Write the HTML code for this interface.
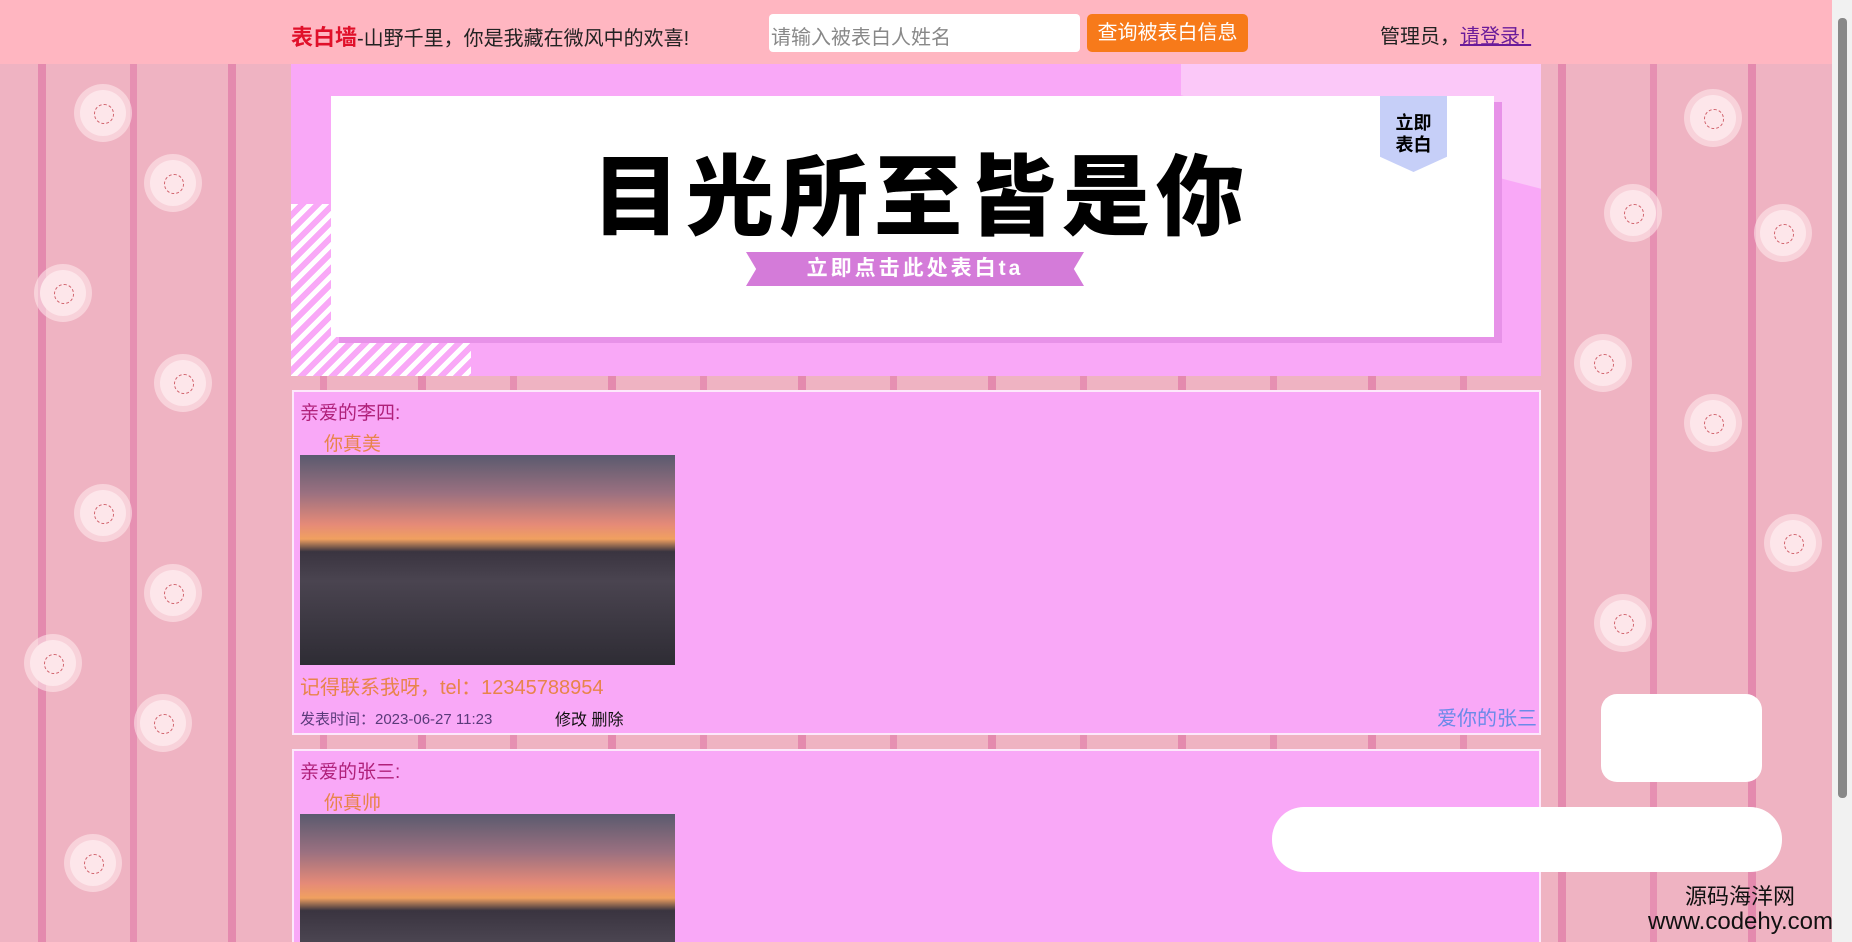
<!DOCTYPE html>
<html style="overflow:hidden;width:1852px;height:942px"><head><meta charset="utf-8"><style>
*{margin:0;padding:0;box-sizing:border-box}
body{width:1852px;height:942px;overflow:hidden;position:relative;font-family:"Liberation Sans","Noto Sans CJK SC",sans-serif;
background:#efb3c2;
background-image:repeating-linear-gradient(90deg,transparent 0 38px,#e48aae 38px 46px,transparent 46px 130px,#e690b2 130px 137px,transparent 137px 190px);}
.fl{position:absolute;width:46px;height:46px;border-radius:50%;background:#fde6ea;box-shadow:0 0 0 6px rgba(253,230,234,.6)}
.fl:after{content:"";position:absolute;left:14px;top:14px;width:18px;height:18px;border-radius:50%;border:1px dashed #d0606a}
.top{position:absolute;left:0;top:0;width:1832px;height:64px;background:#ffb6c1}
.sb{position:absolute;left:1832px;top:0;width:20px;height:942px;background:#f1f1f1}
.sb div{position:absolute;left:6px;top:18px;width:9px;height:780px;background:#888;border-radius:4px}
.img{position:absolute;left:6px;top:63px;width:375px;height:210px;background:linear-gradient(180deg,#5a5a6e 0%,#9a7080 18%,#e58a78 33%,#f0a060 40%,#3a3440 46%,#4a4450 60%,#2e2c34 100%)}
</style></head><body>
<div class="fl" style="left:80px;top:90px"></div><div class="fl" style="left:150px;top:160px"></div><div class="fl" style="left:40px;top:270px"></div><div class="fl" style="left:160px;top:360px"></div><div class="fl" style="left:80px;top:490px"></div><div class="fl" style="left:150px;top:570px"></div><div class="fl" style="left:30px;top:640px"></div><div class="fl" style="left:140px;top:700px"></div><div class="fl" style="left:70px;top:840px"></div>
<div class="fl" style="left:1690px;top:95px"></div><div class="fl" style="left:1610px;top:190px"></div><div class="fl" style="left:1760px;top:210px"></div><div class="fl" style="left:1580px;top:340px"></div><div class="fl" style="left:1690px;top:400px"></div><div class="fl" style="left:1770px;top:520px"></div><div class="fl" style="left:1600px;top:600px"></div><div class="fl" style="left:1700px;top:820px"></div>
<div class="top"></div>
<div style="position:absolute;left:291px;top:20px;font-size:20px;color:#222;white-space:nowrap"><b style="color:#e0102a;font-size:22px">表白墙</b>-山野千里，你是我藏在微风中的欢喜!</div>
<div style="position:absolute;left:769px;top:14px;width:311px;height:38px;background:#fff;border-radius:4px;font-size:20px;color:#888;padding:7px 2px">请输入被表白人姓名</div>
<div style="position:absolute;left:1087px;top:14px;width:161px;height:38px;background:#f77a1a;border-radius:5px;font-size:20px;color:#fff;text-align:center;line-height:38px">查询被表白信息</div>
<div style="position:absolute;left:1380px;top:20px;font-size:20px;color:#222;white-space:nowrap">管理员，<span style="color:#6a1b9a;text-decoration:underline">请登录!&nbsp;</span></div>
<div style="position:absolute;left:291px;top:64px;width:1250px;height:312px;background:#f9a8f7;overflow:hidden">
 <div style="position:absolute;left:890px;top:0;width:360px;height:312px;background:#fbc8f8;clip-path:polygon(0 0,100% 0,100% 40%,0 10%)"></div>
 <div style="position:absolute;left:0;top:140px;width:180px;height:172px;background:repeating-linear-gradient(135deg,#fff 0 5px,transparent 5px 11px)"></div>
 <div style="position:absolute;left:48px;top:38px;width:1163px;height:241px;background:#e792e8"></div>
 <div style="position:absolute;left:40px;top:32px;width:1163px;height:241px;background:#fff"></div>
 <div style="position:absolute;left:0;top:86px;width:1250px;text-align:center;font-size:88px;line-height:96px;font-weight:900;letter-spacing:6px;color:#000;padding-left:10px">目光所至皆是你</div>
 <div style="position:absolute;left:455px;top:188px;width:338px;height:34px;background:#d47bd9;clip-path:polygon(0 0,100% 0,97% 50%,100% 100%,0 100%,3% 50%);color:#fff;font-size:21px;font-weight:bold;text-align:center;line-height:34px;letter-spacing:3px">立即点击此处表白ta</div>
 <div style="position:absolute;left:1089px;top:32px;width:67px;height:76px;background:#c6cff8;clip-path:polygon(0 0,100% 0,100% 80%,50% 100%,0 80%);font-size:18px;font-weight:bold;text-align:center;line-height:22px;padding-top:16px">立即<br>表白</div>
</div>
<div style="position:absolute;left:292px;top:390px;width:1249px;height:345px;background:#f9a8f7;border:2px solid #fde8fb">
 <div style="position:absolute;left:6px;top:6px;font-size:19px;color:#b0207a">亲爱的李四:</div>
 <div style="position:absolute;left:30px;top:37px;font-size:19px;color:#e8844a">你真美</div>
 <div class="img"></div>
 <div style="position:absolute;left:6px;top:279px;font-size:20px;color:#e8844a">记得联系我呀，tel：12345788954</div>
 <div style="position:absolute;left:6px;top:316px;font-size:15px;color:#5a3a7a">发表时间：2023-06-27 11:23</div>
 <div style="position:absolute;left:261px;top:314px;font-size:16px;color:#111">修改 删除</div>
 <div style="position:absolute;right:2px;top:310px;font-size:20px;color:#6a8ae8">爱你的张三</div>
</div>
<div style="position:absolute;left:292px;top:749px;width:1249px;height:193px;background:#f9a8f7;border:2px solid #fde8fb;border-bottom:none;overflow:hidden">
 <div style="position:absolute;left:6px;top:6px;font-size:19px;color:#b0207a">亲爱的张三:</div>
 <div style="position:absolute;left:30px;top:37px;font-size:19px;color:#e8844a">你真帅</div>
 <div class="img"></div>
</div>
<div style="position:absolute;left:1601px;top:694px;width:161px;height:88px;background:#fff;border-radius:16px"></div>
<div style="position:absolute;left:1272px;top:807px;width:510px;height:65px;background:#fff;border-radius:32px"></div>
<div style="position:absolute;left:1685px;top:884px;font-size:22px;line-height:26px;color:#111">源码海洋网</div>
<div style="position:absolute;left:1648px;top:908px;font-size:24px;line-height:28px;color:#111">www.codehy.com</div>
<div class="sb"><div></div></div>
</body></html>
